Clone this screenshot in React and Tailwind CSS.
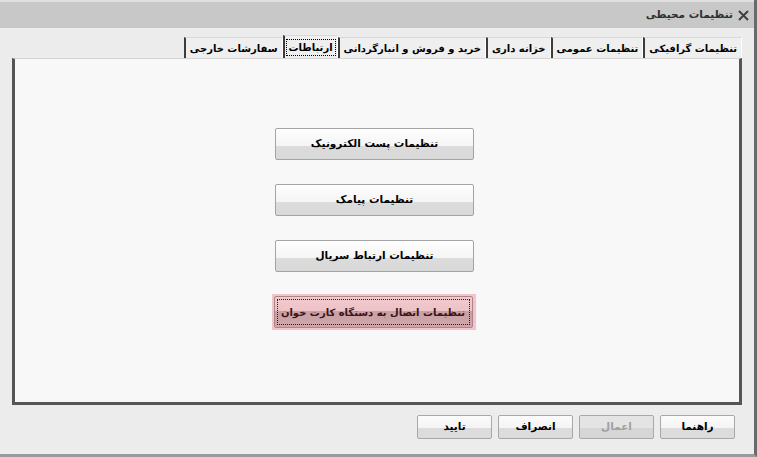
import React from 'react';

const font = { fontFamily: '"DejaVu Sans", Tahoma, sans-serif' };

const tabs = [
  { label: 'تنظیمات گرافیکی' },
  { label: 'تنظیمات عمومی' },
  { label: 'خزانه داری' },
  { label: 'خرید و فروش و انبارگردانی' },
  { label: 'ارتباطات', active: true },
  { label: 'سفارشات خارجی' },
];

const settingsButtons = [
  'تنظیمات پست الکترونیک',
  'تنظیمات پیامک',
  'تنظیمات ارتباط سریال',
];

function PlainButton({ children, disabled }) {
  return (
    <button
      className={`h-[24px] w-[75px] rounded-[2px] border border-[#a8a8a8] text-[10.5px] font-bold ${
        disabled
          ? 'text-[#a0a0a0] bg-[linear-gradient(to_bottom,#e4e4e4_0%,#e4e4e4_55%,#d6d6d6_55%,#d6d6d6_100%)]'
          : 'text-black bg-[linear-gradient(to_bottom,#fbfbfb_0%,#f4f4f4_55%,#dcdcdc_55%,#dcdcdc_100%)]'
      }`}
    >
      {children}
    </button>
  );
}

function SettingButton({ children }) {
  return (
    <button className="h-[32px] w-[199px] rounded-[2px] border border-[#a4a4a4] bg-[linear-gradient(to_bottom,#fdfdfd_0%,#f5f5f5_58%,#dcdcdc_58%,#d8d8d8_100%)] text-[10.5px] font-bold text-black whitespace-nowrap">
      {children}
    </button>
  );
}

export default function App() {
  return (
    <div dir="rtl" style={font} className="w-[757px] h-[457px] bg-[#ececec] flex flex-col overflow-hidden border-r-[3px] border-r-[#6a6a6a] border-b-[3px] border-b-[#9a9a9a] select-none">
      {/* title bar */}
      <div className="h-[28px] shrink-0 bg-[#c8c8c8] border-t-2 border-t-[#e0e0e0] flex items-center gap-[5px] pr-[5px]">
        <svg width="11" height="11" viewBox="0 0 11 11" className="mt-[1px]">
          <path d="M1 1 L10 10 M10 1 L1 10" stroke="#404040" strokeWidth="2" />
        </svg>
        <span className="text-[10.5px] font-bold text-[#303030]">تنظیمات محیطی</span>
      </div>

      {/* tabs */}
      <div className="flex items-end h-[30px] shrink-0 pr-[12px]">
        {tabs.map((t) => (
          <div
            key={t.label}
            className={`px-[1px] text-[10px] font-bold text-black bg-[#efefef] border-r border-r-white border-l-2 border-l-[#3c3c3c] border-t border-t-[#d8d8d8] flex items-center whitespace-nowrap ${
              t.active ? 'h-[23px]' : 'h-[21px]'
            }`}
          >
            <span className={t.active ? 'border border-dotted border-black px-[2px] leading-[15px]' : 'px-[3px] leading-[15px]'}>
              {t.label}
            </span>
          </div>
        ))}
      </div>

      {/* panel */}
      <div className="mx-[12px] h-[347px] shrink-0 bg-[#f8f8f8] border-t border-t-[#d4d4d4] border-l-[3px] border-l-[#555] border-r-[3px] border-r-[#555] border-b-[3px] border-b-[#555] flex flex-col items-center pt-[69px] pr-[5px] gap-[24px]">
        {settingsButtons.map((b) => (
          <SettingButton key={b}>{b}</SettingButton>
        ))}
        <div className="bg-[#f4c4c8] py-[2px] pr-[3px] pl-[2px] -mt-[2px] mr-[2px]">
          <button className="h-[32px] w-[199px] rounded-[2px] border border-[#a8868a] bg-[linear-gradient(to_bottom,#f2cace_0%,#ecc2c6_48%,#c9a0a4_48%,#cfa8ac_100%)] text-[10px] font-bold text-[#3a1418] p-[2px] whitespace-nowrap">
            <div className="h-full w-full border border-dotted border-[#3a1418] flex items-center justify-center">
              تنظیمات اتصال به دستگاه کارت خوان
            </div>
          </button>
        </div>
      </div>

      {/* footer buttons */}
      <div className="flex gap-[6px] pr-[19px] pt-[10px]">
        <PlainButton>راهنما</PlainButton>
        <PlainButton disabled>اعمال</PlainButton>
        <PlainButton>انصراف</PlainButton>
        <PlainButton>تایید</PlainButton>
      </div>
    </div>
  );
}
